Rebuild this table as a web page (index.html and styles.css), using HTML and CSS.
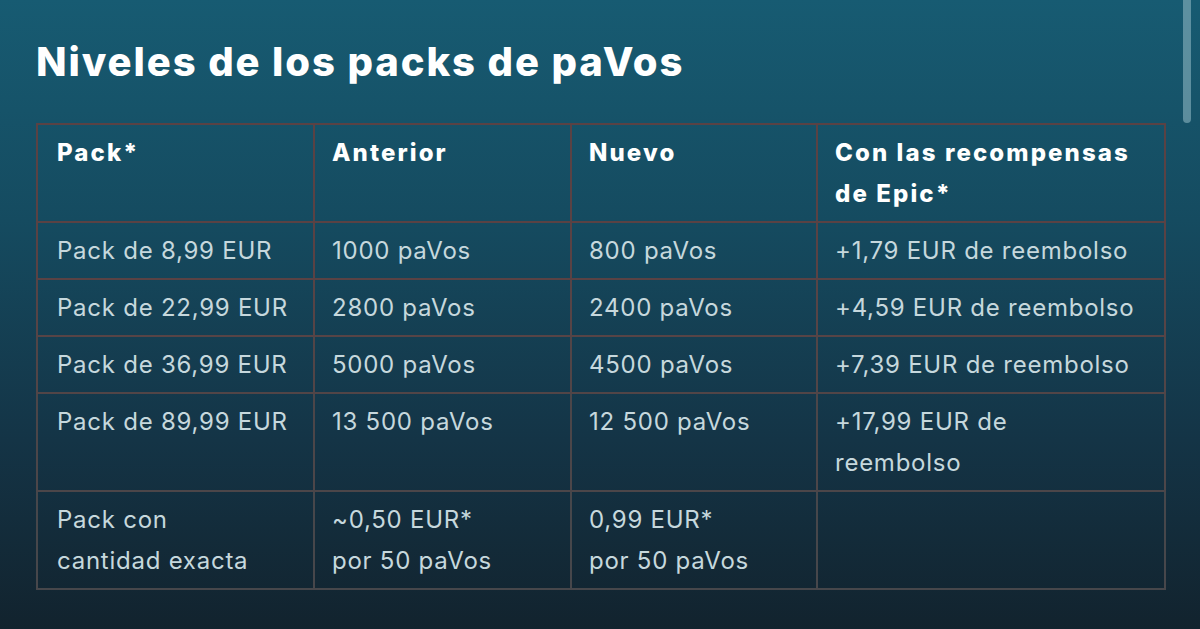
FILE: index.html
```html
<!DOCTYPE html>
<html lang="es">
<head>
<meta charset="utf-8">
<title>Niveles de los packs de paVos</title>
<link rel="stylesheet" href="styles.css">
</head>
<body>
<main class="page">
  <h2 class="title">Niveles de los packs de paVos</h2>
  <table class="tiers">
    <colgroup>
      <col class="c1"><col class="c2"><col class="c3"><col class="c4">
    </colgroup>
    <thead>
      <tr class="r0">
        <th>Pack*</th>
        <th>Anterior</th>
        <th>Nuevo</th>
        <th>Con las recompensas de Epic*</th>
      </tr>
    </thead>
    <tbody>
      <tr class="r1">
        <td>Pack de 8,99 EUR</td><td>1000 paVos</td><td>800 paVos</td><td>+1,79 EUR de reembolso</td>
      </tr>
      <tr class="r2">
        <td>Pack de 22,99 EUR</td><td>2800 paVos</td><td>2400 paVos</td><td>+4,59 EUR de reembolso</td>
      </tr>
      <tr class="r3">
        <td>Pack de 36,99 EUR</td><td>5000 paVos</td><td>4500 paVos</td><td>+7,39 EUR de reembolso</td>
      </tr>
      <tr class="r4">
        <td>Pack de 89,99 EUR</td><td>13 500 paVos</td><td>12 500 paVos</td><td>+17,99 EUR de<br>reembolso</td>
      </tr>
      <tr class="r5">
        <td>Pack con<br>cantidad exacta</td><td>~0,50 EUR*<br>por 50 paVos</td><td>0,99 EUR*<br>por 50 paVos</td><td></td>
      </tr>
    </tbody>
  </table>
</main>
<div class="scrollbar"></div>
</body>
</html>
```

FILE: styles.css
```css
html, body {
  margin: 0;
  padding: 0;
  height: 100%;
}
body {
  background: linear-gradient(180deg, #175b72 0%, #154b60 35%, #143446 70%, #12232e 100%);
  font-family: Inter, "Noto Sans", sans-serif;
  overflow: hidden;
  position: relative;
}
.page {
  padding: 39px 36px 0 36px;
}
.title {
  margin: 0 0 38px 0;
  font-family: Inter, "Noto Sans", sans-serif;
  font-weight: 800;
  font-size: 40px;
  line-height: 46px;
  color: #ffffff;
  letter-spacing: 1.9px;
}
.tiers {
  width: 1128px;
  table-layout: fixed;
  border-collapse: collapse;
  border: 2px solid #5a4244;
}
.c1 { width: 277px; }
.c2 { width: 257px; }
.c3 { width: 246px; }
.c4 { width: 348px; }
.tiers th, .tiers td {
  border: 2px solid #5a4244;
  padding: 7px 12px 7px 17px;
  vertical-align: top;
  text-align: left;
  line-height: 41px;
}
.tiers th:first-child, .tiers td:first-child {
  padding-left: 19px;
}
.tiers th {
  font-weight: 800;
  font-size: 24px;
  color: #ffffff;
  letter-spacing: 2.1px;
}
.tiers td {
  font-weight: 400;
  font-size: 24px;
  color: #c6d8dd;
  letter-spacing: 0.75px;
}
.r2 td { border-color: #574446; }
.r3 td { border-color: #524547; }
.r4 td { border-color: #4c4649; }
.r5 td { border-color: #47474b; }
.scrollbar {
  position: absolute;
  top: 0;
  right: 9px;
  width: 8px;
  height: 123px;
  border-radius: 0 0 4px 4px;
  background: rgba(140, 180, 192, 0.6);
}
```
